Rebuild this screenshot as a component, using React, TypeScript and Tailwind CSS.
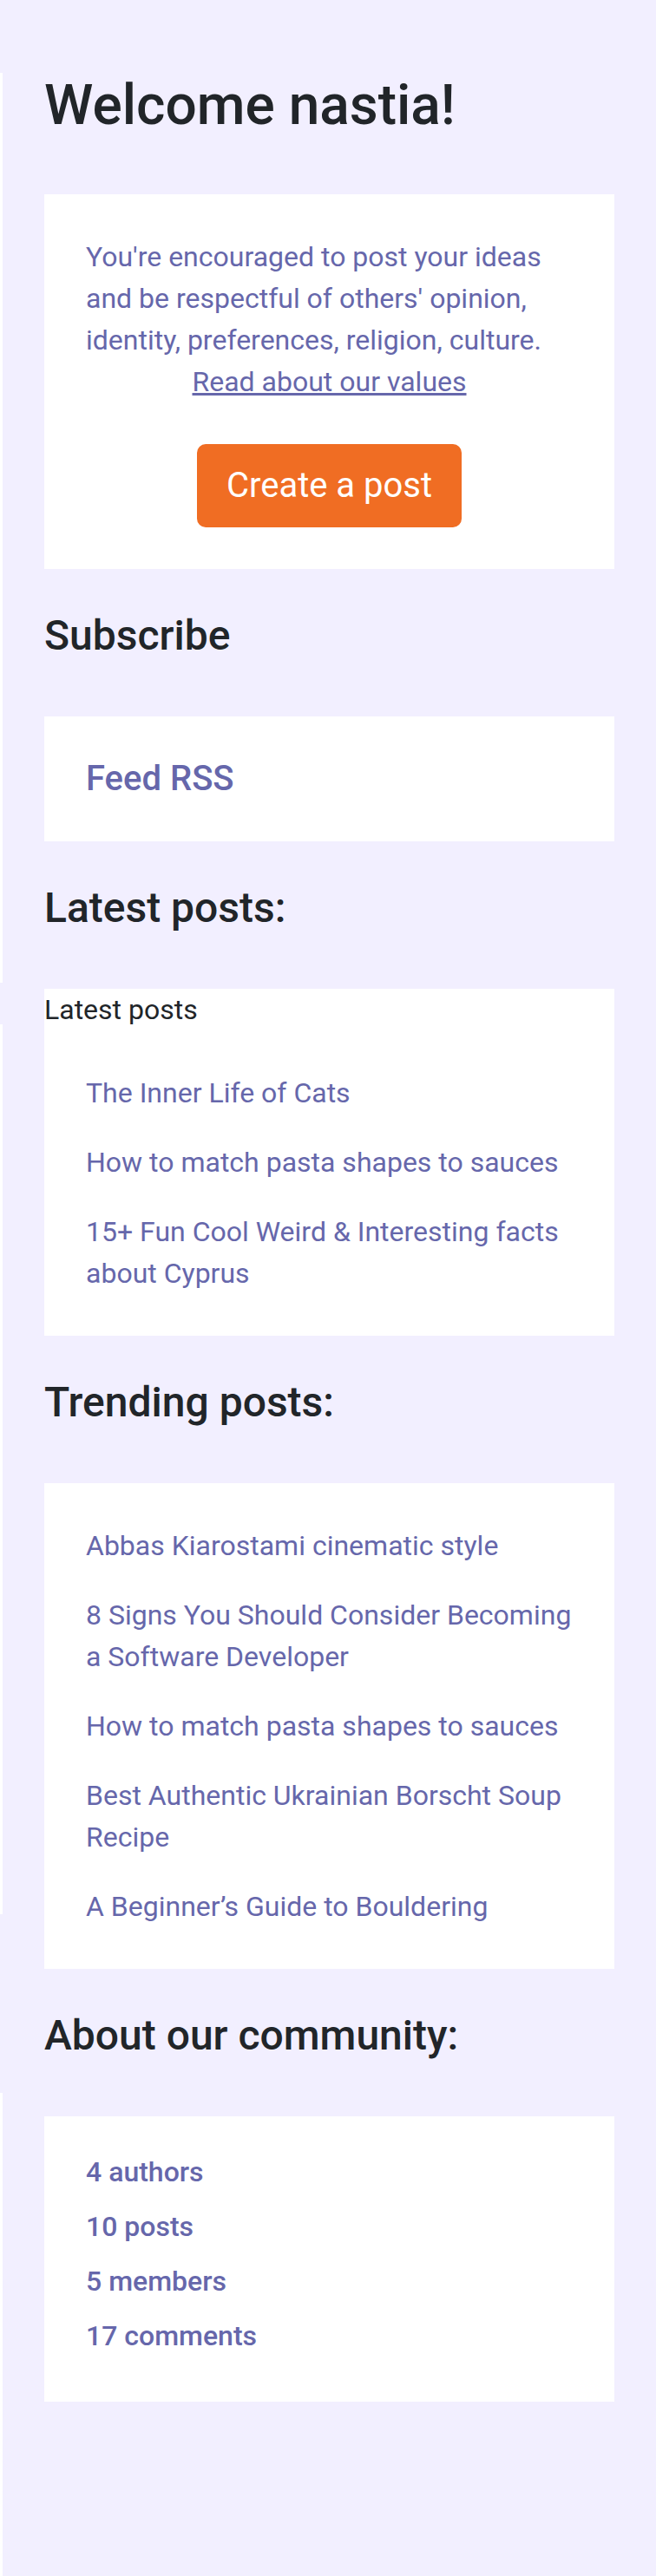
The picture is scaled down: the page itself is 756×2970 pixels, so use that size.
import type { ReactNode } from "react";

function Heading({ children }: { children: ReactNode }) {
  return <h2 className="pt-12 pb-16 text-[48px] leading-[58px] font-medium text-[#212529]">{children}</h2>;
}

function PostList({ posts }: { posts: string[] }) {
  return (
    <ul className="flex flex-col gap-8 px-12">
      {posts.map((post) => (
        <li key={post}>
          <a href="#" className="block">{post}</a>
        </li>
      ))}
    </ul>
  );
}

const latest = [
  "The Inner Life of Cats",
  "How to match pasta shapes to sauces",
  "15+ Fun Cool Weird & Interesting facts about Cyprus",
];
const trending = [
  "Abbas Kiarostami cinematic style",
  "8 Signs You Should Consider Becoming a Software Developer",
  "How to match pasta shapes to sauces",
  "Best Authentic Ukrainian Borscht Soup Recipe",
  "A Beginner’s Guide to Bouldering",
];
const stats = ["4 authors", "10 posts", "5 members", "17 comments"];

export default function App() {
  return (
    <div className="flex min-h-screen bg-[#f2efff] font-['Roboto',sans-serif] text-[32px] leading-[48px] text-[#6667ab]">
      <div className="flex w-[3px] shrink-0 flex-col gap-12 pt-[84px]">
        <div className="h-[1049px] bg-white" />
        <div className="h-[1026px] bg-white" />
        <div className="mt-[158px] grow bg-white" />
      </div>
      <aside className="min-w-0 grow px-12 pt-[84px] pb-12">
        <h1 className="pb-16 text-[64px] leading-[76px] font-medium text-[#212529]">Welcome nastia!</h1>
        <section className="flex flex-col items-center bg-white p-12">
          <p>You're encouraged to post your ideas and be respectful of others' opinion, identity, preferences, religion, culture.</p>
          <a href="#" className="underline decoration-[3px]">Read about our values</a>
          <button type="button" className="mt-12 h-24 rounded-[10px] bg-[#f06d23] px-[34px] text-[40px] leading-[60px] text-white">Create a post</button>
        </section>
        <Heading>Subscribe</Heading>
        <section className="bg-white p-12 text-[40px] font-medium">
          <a href="#" className="block">Feed RSS</a>
        </section>
        <Heading>Latest posts:</Heading>
        <section className="bg-white pb-12">
          <p className="pb-12 text-[#212529]">Latest posts</p>
          <PostList posts={latest} />
        </section>
        <Heading>Trending posts:</Heading>
        <section className="bg-white py-12">
          <PostList posts={trending} />
        </section>
        <Heading>About our community:</Heading>
        <section className="bg-white px-12 pt-10 pb-[52px]">
          <ul className="flex flex-col gap-[15px] font-medium">
            {stats.map((stat) => (
              <li key={stat}>{stat}</li>
            ))}
          </ul>
        </section>
      </aside>
    </div>
  );
}
